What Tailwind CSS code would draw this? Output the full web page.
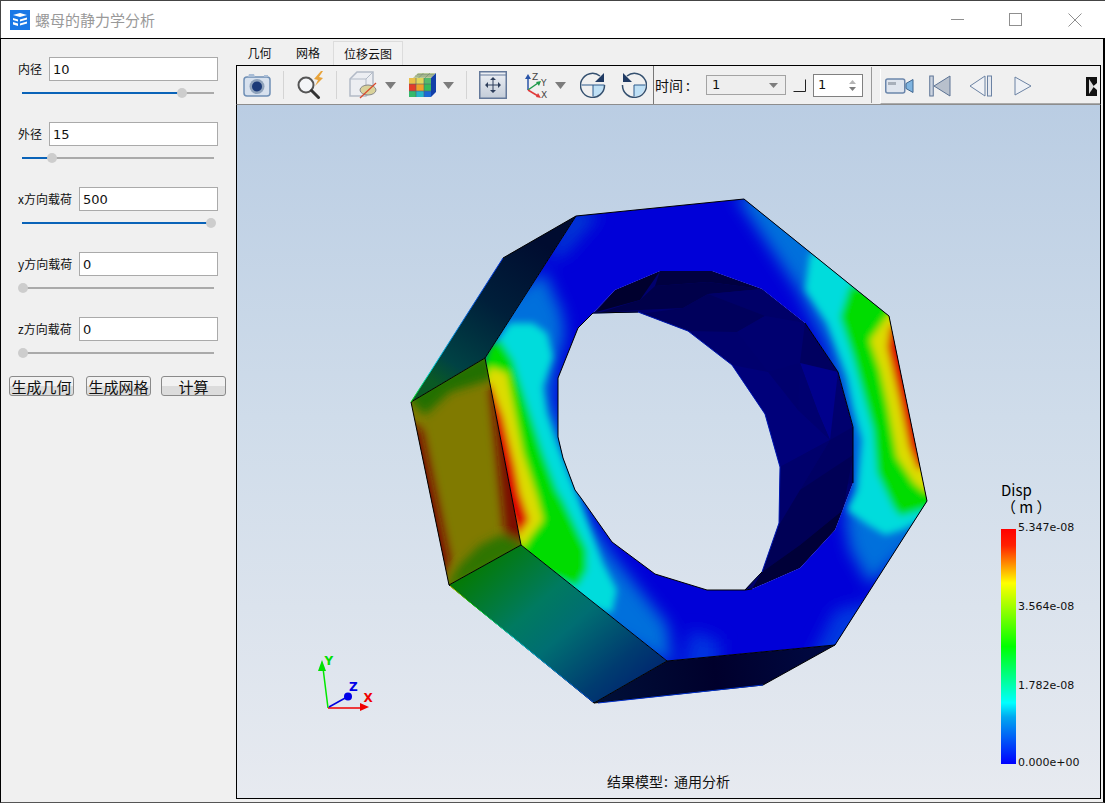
<!DOCTYPE html>
<html lang="zh">

<head>
  <meta charset="UTF-8">
  <title>螺母的静力学分析</title>
  <script src="https://cdn.jsdelivr.net/npm/@tailwindcss/browser@4"></script>
</head>

<body class="w-[1105px] h-[803px] overflow-hidden bg-white flex flex-col font-['Noto_Sans_CJK_SC',sans-serif] text-[#111]">
  <!-- Title Bar -->
  <div class="h-[38px] shrink-0 flex items-center bg-white border-t border-[#444] border-l">
    <svg class="ml-[9px] w-5 h-5" viewBox="0 0 20 20">
      <rect width="20" height="20" fill="#1a78e6" />
      <path d="M3 5l7-2 7 2-7 2zM3 8l5 1.600v2L3 10zM3 12l5 1.600v2.400L3 14.400zM10 9.500l7-2v2l-7 2zM10 13.500l7-2v2l-7 2z" fill="#fff" />
    </svg>
    <span class="ml-[5px] text-[15px] leading-none text-[#999]">螺母的静力学分析</span>
    <svg class="ml-auto mr-[23px] w-[131px] h-[14px]" viewBox="0 0 131 14" fill="none" stroke="#8f8f8f">
      <path d="M0 6.500h13" />
      <rect x="58.500" y="0.500" width="12" height="12" />
      <path d="M117.500 .5l13 13M130.500 .5l-13 13" />
    </svg>
  </div>

  <!-- Main -->
  <div class="flex-1 min-h-0 flex bg-[#f0f0f0] border-t border-black border-l border-r-2 border-b border-b-[#555]">
    <!-- Left Panel -->
    <aside class="w-[235px] shrink-0 flex flex-col pt-[18px] text-[12px]">
      <div class="flex items-center h-6 pl-[17px] w-[217px]">
        <span class="w-[31px] shrink-0">内径</span>
        <input value="10" class="w-[169px] h-6 bg-white border border-[#aaa] pl-[3px] text-[13px] font-['DejaVu_Sans',sans-serif] outline-none">
      </div>
      <div class="relative ml-[21px] w-[192px] h-[2px] mt-[11px] mb-[28px] bg-[#aaa]">
        <div class="h-full w-[160px] bg-[#0a63b8]"></div>
        <div class="absolute left-[155px] top-[-4px] w-[10px] h-[10px] rounded-full bg-[#cdcdcd]"></div>
      </div>

      <div class="flex items-center h-6 pl-[17px] w-[217px]">
        <span class="w-[31px] shrink-0">外径</span>
        <input value="15" class="w-[169px] h-6 bg-white border border-[#aaa] pl-[3px] text-[13px] font-['DejaVu_Sans',sans-serif] outline-none">
      </div>
      <div class="relative ml-[21px] w-[192px] h-[2px] mt-[11px] mb-[28px] bg-[#aaa]">
        <div class="h-full w-[30px] bg-[#0a63b8]"></div>
        <div class="absolute left-[25px] top-[-4px] w-[10px] h-[10px] rounded-full bg-[#cdcdcd]"></div>
      </div>

      <div class="flex items-center h-6 pl-[17px] w-[217px]">
        <span class="w-[61px] shrink-0">x方向载荷</span>
        <input value="500" class="w-[139px] h-6 bg-white border border-[#aaa] pl-[3px] text-[13px] font-['DejaVu_Sans',sans-serif] outline-none">
      </div>
      <div class="relative ml-[21px] w-[192px] h-[2px] mt-[11px] mb-[28px] bg-[#0a63b8]">
        <div class="absolute left-[184px] top-[-4px] w-[10px] h-[10px] rounded-full bg-[#cdcdcd]"></div>
      </div>

      <div class="flex items-center h-6 pl-[17px] w-[217px]">
        <span class="w-[61px] shrink-0">y方向载荷</span>
        <input value="0" class="w-[139px] h-6 bg-white border border-[#aaa] pl-[3px] text-[13px] font-['DejaVu_Sans',sans-serif] outline-none">
      </div>
      <div class="relative ml-[21px] w-[192px] h-[2px] mt-[11px] mb-[28px] bg-[#aaa]">
        <div class="absolute left-[-4px] top-[-4px] w-[10px] h-[10px] rounded-full bg-[#cdcdcd]"></div>
      </div>

      <div class="flex items-center h-6 pl-[17px] w-[217px]">
        <span class="w-[61px] shrink-0">z方向载荷</span>
        <input value="0" class="w-[139px] h-6 bg-white border border-[#aaa] pl-[3px] text-[13px] font-['DejaVu_Sans',sans-serif] outline-none">
      </div>
      <div class="relative ml-[21px] w-[192px] h-[2px] mt-[11px] bg-[#aaa]">
        <div class="absolute left-[-4px] top-[-4px] w-[10px] h-[10px] rounded-full bg-[#cdcdcd]"></div>
      </div>

      <div class="flex mt-[22px] pl-2 text-[15px]">
        <button class="w-[65px] h-5 leading-none rounded-[3px] border border-[#8a8a8a] bg-[linear-gradient(#f2f2f2_50%,#dcdcdc_50%)]">生成几何</button>
        <button class="ml-3 w-[65px] h-5 leading-none rounded-[3px] border border-[#8a8a8a] bg-[linear-gradient(#f2f2f2_50%,#dcdcdc_50%)]">生成网格</button>
        <button class="ml-[10px] w-[65px] h-5 leading-none rounded-[3px] border border-[#8a8a8a] bg-[linear-gradient(#f2f2f2_50%,#dcdcdc_50%)]">计算</button>
      </div>
    </aside>

    <!-- Right Pane -->
    <section class="w-[865px] mb-[3px] flex flex-col">
      <!-- Tabs -->
      <div class="h-[26px] shrink-0 flex items-end text-[12px]">
        <span class="w-[47px] h-6 leading-6 text-center">几何</span>
        <span class="w-[50px] h-6 leading-6 text-center">网格</span>
        <span class="w-[70px] h-6 leading-6 text-center bg-[#f2f2f2] border border-b-0 border-[#dcdcdc]">位移云图</span>
      </div>

      <!-- Toolbar -->
      <div class="h-10 shrink-0 flex items-stretch pl-[6px] bg-[#f0f0f0] border-t border-black border-l border-r border-r-black border-b border-l-black border-b-[#8d8d8d]">
        <svg class="self-center w-[28px] h-6" viewBox="0 0 28 24">
          <rect x="1" y="4" width="26" height="19" rx="3" fill="#d7e1ee" stroke="#6f8fb5" stroke-width="1.500" />
          <path d="M5 4l1-3h5l1 3zM21 4v-2h4v2" fill="#a9bdd6" />
          <circle cx="14" cy="13.500" r="7.500" fill="#8fa3bc" />
          <circle cx="14" cy="13.500" r="5" fill="#1b3a78" />
        </svg>
        <div class="ml-3 my-[5px] w-px bg-[#d4d4d4]"></div>
        <svg class="ml-3 self-center w-[30px] h-7" viewBox="0 0 30 28">
          <circle cx="10" cy="14" r="7.500" fill="#f3f5f8" stroke="#555" stroke-width="2" />
          <path d="M15.500 19.500l7 7" stroke="#333" stroke-width="3" stroke-linecap="round" />
          <path d="M25 0l-7 8 4 1-3 6 8-8-4-1 4-6z" fill="#e8a33a" />
        </svg>
        <div class="ml-[10px] my-[5px] w-px bg-[#d4d4d4]"></div>
        <svg class="ml-3 self-center w-[29px] h-7" viewBox="0 0 29 28">
          <path d="M1 8l7-7h16v16l-7 8H1z" fill="#eceef2" stroke="#b2bac6" stroke-width="1.500" />
          <path d="M1 8h16v17M17 8l7-7" fill="none" stroke="#b2bac6" />
          <ellipse cx="19" cy="19" rx="8" ry="5" fill="#d9d29a" stroke="#888" />
          <path d="M11 27l16-15" stroke="#d9482b" stroke-width="1.200" />
        </svg>
        <svg class="ml-[7px] self-center w-[11px] h-[7px]" viewBox="0 0 11 7"><path d="M0 0h11l-5.500 7z" fill="#7c7c7c" /></svg>
        <svg class="ml-3 self-center w-[28px] h-[26px]" viewBox="0 0 28 26">
          <path d="M5 6l5-5h18l-5 5z" fill="#b9c99a" />
          <path d="M10.500 6l5-5M17 6l5-5M7 4h18M9 2.500h17" stroke="#6b7f6a" stroke-width=".5" />
          <path d="M23 6l5-5v19l-5 5z" fill="#123fa8" />
          <rect x="1" y="6" width="22" height="19" fill="#f3d23a" />
          <rect x="1" y="6" width="7" height="6" fill="#e9c04a" /><rect x="8" y="6" width="8" height="6" fill="#dfd75c" /><rect x="16" y="6" width="7" height="6" fill="#52b96d" />
          <rect x="1" y="12" width="7" height="7" fill="#e33c2a" /><rect x="8" y="12" width="8" height="7" fill="#f0a12a" /><rect x="16" y="12" width="7" height="7" fill="#36bb5b" />
          <rect x="1" y="19" width="7" height="6" fill="#35b96b" /><rect x="8" y="19" width="8" height="6" fill="#26b6c8" /><rect x="16" y="19" width="7" height="6" fill="#1c68d6" />
          <path d="M8 6v19M16 6v19M1 12h22M1 19h22" stroke="#55606e" stroke-width=".6" />
        </svg>
        <svg class="ml-[7px] self-center w-[11px] h-[7px]" viewBox="0 0 11 7"><path d="M0 0h11l-5.500 7z" fill="#7c7c7c" /></svg>
        <div class="ml-3 my-[5px] w-px bg-[#d4d4d4]"></div>
        <svg class="ml-3 self-center w-7 h-7" viewBox="0 0 28 28">
          <defs>
            <linearGradient id="fit" x1="0" y1="0" x2="0" y2="1">
              <stop offset="0" stop-color="#eef1f6" />
              <stop offset="1" stop-color="#c3ccd8" />
            </linearGradient>
          </defs>
          <rect x=".75" y=".75" width="26.500" height="26.500" fill="url(#fit)" stroke="#64799a" stroke-width="1.500" />
          <path d="M1 4h26" stroke="#64799a" />
          <path d="M14 8v12M8 14h12" stroke="#2e3f5c" />
          <path d="M14 6l3 3h-6zM14 22l3-3h-6zM6 14l3-3v6zM22 14l-3-3v6z" fill="#2e3f5c" />
        </svg>
        <svg class="ml-4 self-center w-[25px] h-[28px]" viewBox="0 0 25 28">
          <path d="M5 19v-12" stroke="#2a55a8" stroke-width="1.500" /><path d="M5 3l3 5h-6z" fill="#2a55a8" />
          <path d="M5 19l10-7" stroke="#1f9a4a" stroke-width="1.500" /><path d="M18 10l-2 5-3-4z" fill="#1f9a4a" />
          <path d="M5 19l10 6" stroke="#e03a3a" stroke-width="1.500" /><path d="M18 27l-5-1 2-4z" fill="#e03a3a" />
          <text x="9" y="9" font-size="9" fill="#444" font-family="DejaVu Sans">Z</text>
          <text x="18" y="15" font-size="9" fill="#444" font-family="DejaVu Sans">Y</text>
          <text x="18" y="27" font-size="9" fill="#444" font-family="DejaVu Sans">X</text>
        </svg>
        <svg class="ml-[7px] self-center w-[11px] h-[7px]" viewBox="0 0 11 7"><path d="M0 0h11l-5.500 7z" fill="#7c7c7c" /></svg>
        <svg class="ml-[14px] self-center w-[26px] h-[26px]" viewBox="0 0 26 26">
          <path d="M13 13h11a11.500 11.500 0 0 1-11 11.500z" fill="#bfe0f5" />
          <path d="M1.500 13h23M13 13v11.500" stroke="#2c5a8c" fill="none" />
          <path d="M20 4a12 12 0 1 0 4.500 9" stroke="#34506f" stroke-width="1.500" fill="none" />
          <path d="M24 1v9h-9z" fill="#1f3a63" />
        </svg>
        <svg class="ml-[15px] self-center w-[26px] h-[26px]" viewBox="0 0 26 26">
          <path d="M13 13h11.500a11.500 11.500 0 0 1-11.500 11.500z" fill="#bfe0f5" />
          <path d="M13 13h11.500M13 13v11.500" stroke="#2c5a8c" fill="none" />
          <path d="M6 4a12 12 0 1 1-4.500 9" stroke="#34506f" stroke-width="1.500" fill="none" />
          <path d="M2 1v9h9z" fill="#1f3a63" />
        </svg>
        <div class="ml-[6px] w-px bg-[#777]"></div>
        <span class="ml-px self-center w-[35px] text-[14px] leading-none whitespace-nowrap">时间<span class="ml-[3px]">:</span></span>
        <div class="ml-4 self-center w-[80px] h-5 flex items-center justify-between pl-[5px] pr-[7px] bg-[#eeeeee] border border-[#a3a3a3] text-[13px] font-['DejaVu_Sans',sans-serif]">
          <span>1</span>
          <svg class="w-[9px] h-[5px]" viewBox="0 0 9 5"><path d="M0 0h9l-4.500 5z" fill="#7d7d7d" /></svg>
        </div>
        <svg class="ml-[7px] self-center w-[13px] h-[13px]" viewBox="0 0 13 13" fill="none"><path d="M.5 12.500h12V.5" stroke="#222" /></svg>
        <div class="ml-[7px] self-center w-[50px] h-[23px] flex items-center justify-between pl-1 pr-[6px] bg-white border border-[#808080] text-[13px] font-['DejaVu_Sans',sans-serif]">
          <span>1</span>
          <svg class="w-[7px] h-[13px]" viewBox="0 0 7 13"><path d="M0 5l3.500-4 3.500 4z" fill="#b5b5b5" /><path d="M0 8l3.500 4 3.500-4z" fill="#7d7d7d" /></svg>
        </div>
        <div class="ml-2 my-[1px] w-px bg-[#999]"></div>

        <!-- Animation Toolbar -->
        <div class="ml-2 flex-1 flex items-center pl-1 mt-[3px] border-l border-white border-b border-b-[#aaa]">
          <svg class="w-[29px] h-4" viewBox="0 0 29 16">
            <rect x=".75" y="1" width="19" height="14" rx="2" fill="#dfe5ee" stroke="#6b86ab" stroke-width="1.500" />
            <rect x="3" y="4" width="8" height="3" fill="#a7afba" />
            <path d="M21 5.500l7-4v13l-7-4z" fill="#7fb4e0" stroke="#3f6690" />
          </svg>
          <svg class="ml-[15px] w-[22px] h-[22px]" viewBox="0 0 22 22">
            <rect x=".75" y="1" width="3.500" height="20" fill="#ccd4e0" stroke="#5c7394" />
            <path d="M21 1v20L5 11z" fill="#b8c0cc" stroke="#5c7394" />
          </svg>
          <svg class="ml-[18px] w-6 h-[22px]" viewBox="0 0 24 22">
            <path d="M16 1v20L1 11z" fill="#f0f2f6" stroke="#6b82a3" />
            <rect x="18.500" y="1" width="4" height="20" fill="#e5e9f0" stroke="#6b82a3" />
          </svg>
          <svg class="ml-[21px] w-[18px] h-5" viewBox="0 0 18 20">
            <path d="M1 1v18l16-9z" fill="#eef1f6" stroke="#6b82a3" />
          </svg>
          <svg class="ml-auto mr-[3px] w-[11px] h-[19px]" viewBox="0 0 11 19">
            <path d="M0 0h11v6L7 9.500l4 3.500v6H0z" fill="#111" />
            <path d="M3 2l5 7.500-5 7.500z" fill="#ddd" />
          </svg>
        </div>
      </div>

      <!-- 3D View -->
      <div class="relative flex-1 min-h-0 border-l border-r border-b border-black bg-[linear-gradient(#bacde3,#cfdcea_45%,#e7eaf0)] overflow-hidden">
        <svg class="absolute inset-0 w-[863px] h-[694px]" viewBox="237 105 863 694">
          <defs>
            <filter id="blurBand" filterUnits="userSpaceOnUse" x="237" y="105" width="864" height="694">
              <feGaussianBlur stdDeviation="3.500" />
            </filter>
            <filter id="blurFace" filterUnits="userSpaceOnUse" x="237" y="105" width="864" height="694">
              <feGaussianBlur stdDeviation="5" />
            </filter>
            <filter id="blurLight" filterUnits="userSpaceOnUse" x="237" y="105" width="864" height="694">
              <feGaussianBlur stdDeviation="8" />
            </filter>
            <clipPath id="frontClip">
              <path clip-rule="evenodd" d="M576 216L744 199L889 316L927 501L835 645L667 661L521 545L485 358ZM593 313L578 328L558 378L558 437L563 458L575 490L581 498L612 542L655 574L707 590L745 590L752 589L800 568L835 530L853 483L853 427L838 372L805 323L762 289L712 271L660 271L615 290Z" />
            </clipPath>
            <clipPath id="wallClip">
              <polygon points="593,313 615,290 660,271 712,271 762,289 805,323 838,372 853,427 853,483 835,530 800,568 752,589 745,590 762,572 779,523 780,467 765,414 732,365 688,331 638,312" />
            </clipPath>
            <clipPath id="oliveClip">
              <polygon points="485,358 521,545 449,585 411,402" />
            </clipPath>
            <linearGradient id="darkFace" gradientUnits="userSpaceOnUse" x1="545" y1="245" x2="445" y2="390">
              <stop offset="0" stop-color="#000c30" />
              <stop offset=".45" stop-color="#001f3a" />
              <stop offset=".85" stop-color="#004244" />
              <stop offset="1" stop-color="#0a5a24" />
            </linearGradient>
            <linearGradient id="tealFace" gradientUnits="userSpaceOnUse" x1="490" y1="555" x2="620" y2="700">
              <stop offset="0" stop-color="#047a08" />
              <stop offset=".35" stop-color="#007a60" />
              <stop offset=".55" stop-color="#006e72" />
              <stop offset=".85" stop-color="#003c70" />
              <stop offset="1" stop-color="#002a70" />
            </linearGradient>
            <linearGradient id="bottomFace" gradientUnits="userSpaceOnUse" x1="594" y1="690" x2="835" y2="650">
              <stop offset="0" stop-color="#001038" />
              <stop offset=".5" stop-color="#00002c" />
              <stop offset="1" stop-color="#000a44" />
            </linearGradient>
            <linearGradient id="edgeLeft" gradientUnits="userSpaceOnUse" x1="411" y1="402" x2="503" y2="258">
              <stop offset="0" stop-color="#00d800" />
              <stop offset=".2" stop-color="#00d8d8" />
              <stop offset=".6" stop-color="#0060d8" />
              <stop offset="1" stop-color="#0030d8" />
            </linearGradient>
            <linearGradient id="edgeBottom" gradientUnits="userSpaceOnUse" x1="449" y1="585" x2="594" y2="703">
              <stop offset="0" stop-color="#d8d800" />
              <stop offset=".15" stop-color="#00d800" />
              <stop offset=".45" stop-color="#00d8d8" />
              <stop offset="1" stop-color="#0040d8" />
            </linearGradient>
            <linearGradient id="scale" x1="0" y1="0" x2="0" y2="1">
              <stop offset="0" stop-color="#ff0000" />
              <stop offset=".07" stop-color="#ff2000" />
              <stop offset=".23" stop-color="#ffff00" />
              <stop offset=".5" stop-color="#00ff00" />
              <stop offset=".74" stop-color="#00ffff" />
              <stop offset=".8" stop-color="#00a8f0" />
              <stop offset="1" stop-color="#0000ff" />
            </linearGradient>
          </defs>

          <!-- side faces -->
          <polygon points="576,216 485,358 411,402 503,258" fill="url(#darkFace)" />
          <polygon points="485,358 521,545 449,585 411,402" fill="#807a00" />
          <g clip-path="url(#oliveClip)">
            <g filter="url(#blurFace)">
              <polygon points="405,395 490,350 495,378 450,392 425,415" fill="#207000" />
              <polygon points="445,590 525,550 512,530 480,545 460,565" fill="#2f7400" />
              <polygon points="490,385 502,390 530,545 505,535" fill="#7c0800" />
              <polygon points="405,420 422,430 450,560 440,585 415,520" fill="#7c0800" />
            </g>
          </g>
          <polygon points="521,545 667,661 594,703 449,585" fill="url(#tealFace)" />
          <polygon points="667,661 835,645 763,685 594,703" fill="url(#bottomFace)" />

          <!-- inner wall -->
          <polygon points="593,313 615,290 660,271 712,271 762,289 805,323 838,372 853,427 853,483 835,530 800,568 752,589 745,590 762,572 779,523 780,467 765,414 732,365 688,331 638,312" fill="#00006e" />
          <g clip-path="url(#wallClip)">
            <polygon points="596,312 615,290 660,271 640,300" fill="#00002e" />
            <polygon points="660,271 712,271 762,289 708,282 655,286" fill="#000040" />
            <polygon points="655,286 708,282 762,289 708,294 683,308 640,310 598,313 640,300" fill="#00004a" />
            <polygon points="708,294 762,289 805,323 765,316" fill="#000068" />
            <polygon points="640,314 683,308 708,294 765,316 737,332 688,331" fill="#00005c" />
            <polygon points="737,332 765,316 805,323 800,363 768,372" fill="#000070" />
            <polygon points="805,323 838,372 800,363" fill="#000060" />
            <polygon points="800,363 838,372 830,440 818,412" fill="#00008c" />
            <polygon points="800,363 818,412 830,440 798,410" fill="#000070" />
            <polygon points="732,365 768,372 798,410 830,440 780,467 765,414" fill="#00007a" />
            <polygon points="830,440 853,427 853,483 800,490" fill="#000064" />
            <polygon points="780,467 830,440 800,490 779,525" fill="#00006c" />
            <polygon points="779,525 800,490 853,455 843,510 800,545 762,572" fill="#000056" />
            <polygon points="762,572 800,545 843,510 835,530 800,568 752,589" fill="#000038" />
          </g>
          <path d="M593 313L638 312L688 331L732 365L765 414L780 467L779 523L762 572L745 590" fill="none" stroke="#0018b0" />

          <!-- front face -->
          <g clip-path="url(#frontClip)">
            <rect x="470" y="190" width="470" height="480" fill="#0000d8" />
            <g filter="url(#blurLight)">
              <polygon points="570,205 545,260 565,255 600,215" fill="#0034d4" />
              <polygon points="800,680 850,680 880,600 835,610" fill="#0038e0" />
              <polygon points="690,630 720,640 720,680 680,680" fill="#0030e0" />
              <!-- light blue either side of the cyan bands -->
              <polygon points="735,195 765,240 798,290 826,345 843,410 850,490 845,520 850,550 870,585 960,500 950,300 820,190" fill="#0070dc" />
              <polygon points="545,272 552,290 562,312 565,335 555,370 552,400 566,440 590,520 610,552 640,590 668,625 672,665 590,625 470,420 500,300" fill="#0070dc" />
            </g>
            <g filter="url(#blurBand)">
              <!-- right band -->
              <polygon points="810,253 805,290 827,323 837,350 847,377 853,407 862,440 857,490 847,510 868,525 885,535 902,530 960,500 960,300 850,250" fill="#00dcdc" />
              <polygon points="850,285 840,317 853,357 862,390 873,430 877,473 893,507 900,516 960,500 960,320 880,290" fill="#00dc00" />
              <polygon points="888,315 870,340 880,370 888,407 897,457 914,483 925,492 940,490 905,305" fill="#dcdc00" />
              <polygon points="890,326 887,347 900,403 909,447 918,470 935,462 905,325" fill="#dc0000" />
              <!-- left band -->
              <polygon points="510,323 533,323 547,333 553,357 543,387 547,413 557,443 567,470 578,497 603,563 617,590 612,613 560,600 470,430 490,350" fill="#00dcdc" />
              <polygon points="490,345 500,340 513,360 517,373 530,413 543,453 557,490 563,500 587,550 587,570 577,587 510,560 470,400" fill="#00dc00" />
              <polygon points="490,367 507,373 515,413 523,453 537,497 543,520 530,537 523,548 490,500 480,400" fill="#dcdc00" />
              <polygon points="490,382 503,417 515,467 520,493 529,520 518,536 490,470 480,400" fill="#dc0000" />
            </g>
          </g>

          <!-- edges -->
          <g fill="none" stroke="#000" stroke-linejoin="round">
            <path d="M576 216L744 199L889 316L927 501L835 645L667 661L521 545L485 358Z" />
            <path d="M593 313L578 328L558 378L558 437L563 458L575 490L581 498L612 542L655 574L707 590L745 590" />
            <path d="M593 313L638 312M745 590L762 572M745 590L752 589" />
            <path d="M805 323L838 372L853 427L853 483" />
            <path d="M576 216L503 258M485 358L411 402L449 585L521 545M449 585L594 703L667 661M594 703L763 685L835 645" />
          </g>
          <path d="M411 402L503 258" stroke="url(#edgeLeft)" fill="none" />
          <path d="M450 586L593 702" stroke="url(#edgeBottom)" fill="none" />
          <path d="M598 703L763 685" stroke="#0030d0" fill="none" />

          <!-- axes -->
          <path d="M328 708L323 668" stroke="#00e800" stroke-width="1.500" />
          <path d="M322 660l-4 11h8z" fill="#00e000" />
          <path d="M328 708h34" stroke="#f00000" stroke-width="1.500" />
          <path d="M369 707l-9-4v8z" fill="#f00000" />
          <path d="M329 707l18-10" stroke="#0000e0" stroke-width="1.500" />
          <circle cx="348" cy="696.500" r="4" fill="#0000e8" />
          <text x="324.500" y="665" font-size="12" font-weight="700" fill="#00e000" font-family="DejaVu Sans">Y</text>
          <text x="349" y="691" font-size="12" font-weight="700" fill="#0000e8" font-family="DejaVu Sans">Z</text>
          <text x="363.500" y="702" font-size="12" font-weight="700" fill="#f00000" font-family="DejaVu Sans">X</text>

          <!-- color scale -->
          <rect x="1001" y="529" width="15" height="235" fill="url(#scale)" />
        </svg>

        <!-- Legend -->
        <div class="absolute left-[764px] top-[376px] text-[15px] leading-[17px] text-black whitespace-pre">Disp
（ m ）</div>
        <span class="absolute left-[781px] top-[416px] text-[11px] leading-[14px] font-['DejaVu_Sans',sans-serif]">5.347e-08</span>
        <span class="absolute left-[781px] top-[495px] text-[11px] leading-[14px] font-['DejaVu_Sans',sans-serif]">3.564e-08</span>
        <span class="absolute left-[781px] top-[574px] text-[11px] leading-[14px] font-['DejaVu_Sans',sans-serif]">1.782e-08</span>
        <span class="absolute left-[781px] top-[651px] text-[11px] leading-[14px] font-['DejaVu_Sans',sans-serif]">0.000e+00</span>
        <span class="absolute left-[370px] top-[667px] text-[14px] leading-[18px] whitespace-nowrap">结果模型<span class="ml-px mr-[6px]">:</span>通用分析</span>
      </div>
    </section>
  </div>
</body>

</html>
